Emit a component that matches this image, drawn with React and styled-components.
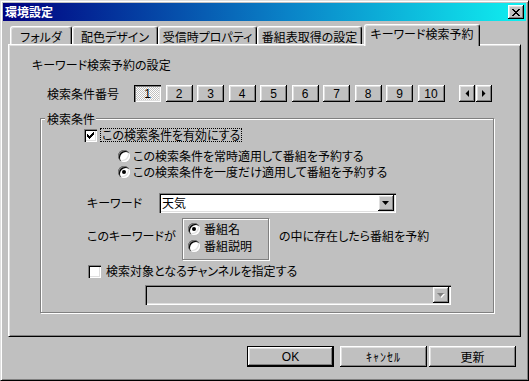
import React from "react";
import styled, { createGlobalStyle } from "styled-components";

const GlobalStyle = createGlobalStyle`
  html, body {
    margin: 0;
    padding: 0;
    background: #c0c0c0;
  }
  body {
    font-family: "Noto Sans CJK JP", "Noto Sans", sans-serif;
    font-size: 12px;
    color: #000;
  }
  * {
    box-sizing: border-box;
  }
`;

const raised = `
  box-shadow: inset -1px -1px #000, inset 1px 1px #fff, inset -2px -2px #808080,
    inset 2px 2px #dfdfdf;
`;

const sunken = `
  box-shadow: inset 1px 1px #808080, inset 2px 2px #000, inset -1px -1px #fff,
    inset -2px -2px #dfdfdf;
`;

const Window = styled.div`
  width: 529px;
  height: 381px;
  background: #c0c0c0;
  border: 1px solid;
  border-color: #dfdfdf #000 #000 #dfdfdf;
  box-shadow: inset 1px 1px #fff, inset -1px -1px #808080;
  padding: 2px;
  display: flex;
  flex-direction: column;
  font-feature-settings: "palt";
`;

const TitleBar = styled.div`
  height: 18px;
  display: flex;
  align-items: center;
  justify-content: space-between;
  padding: 0 2px 0 2px;
  background: linear-gradient(to right, #000080, #0a84c8 55%, #10f0f0);
`;

const Title = styled.span`
  color: #fff;
  font-weight: bold;
  font-size: 12px;
  line-height: 14px;
`;

const CloseButton = styled.span`
  width: 16px;
  height: 14px;
  background: #c0c0c0;
  ${raised}
  display: flex;
  align-items: center;
  justify-content: center;
`;

const TabRow = styled.div`
  display: flex;
  align-items: flex-end;
  height: 20px;
  margin-top: 3px;
  padding-left: 7px;
`;

const Tab = styled.div`
  position: relative;
  width: ${(p) => p.$w}px;
  height: ${(p) => (p.$active ? 22 : 18)}px;
  margin-left: ${(p) => (p.$active ? 2 : 0)}px;
  margin-bottom: ${(p) => (p.$active ? -2 : 0)}px;
  z-index: ${(p) => (p.$active ? 1 : 0)};
  background: #c0c0c0;
  border: 1px solid;
  border-color: #fff #000 transparent #fff;
  border-bottom: none;
  border-radius: 3px 3px 0 0;
  box-shadow: inset -1px 0 #808080, inset 1px 1px #dfdfdf;
  text-align: center;
  line-height: 14px;
  padding-top: ${(p) => (p.$active ? 2 : 3)}px;
  white-space: nowrap;
`;

const Panel = styled.div`
  width: 513px;
  height: 293px;
  margin-left: 5px;
  border: 1px solid;
  border-color: #fff #000 #000 #fff;
  box-shadow: inset 1px 1px #dfdfdf, inset -1px -1px #808080;
  display: flex;
  flex-direction: column;
`;

const Heading = styled.div`
  margin: 13px 0 0 23px;
  line-height: 14px;
`;

const NumberRow = styled.div`
  display: flex;
  align-items: center;
  height: 17px;
  margin: 13px 0 0 38px;
`;

const RowLabel = styled.span`
  width: ${(p) => p.$w}px;
  flex-shrink: 0;
  line-height: 14px;
  white-space: nowrap;
`;

const NumberButtons = styled.div`
  display: flex;
  gap: 4.5px;
`;

const NumButton = styled.span`
  width: 27px;
  height: 17px;
  display: flex;
  align-items: center;
  justify-content: center;
  font-family: "Liberation Sans", Arial, sans-serif;
  font-size: 12px;
  background: ${(p) =>
    p.$pressed
      ? "repeating-conic-gradient(#c0c0c0 0% 25%, #fff 0% 50%) 0 0 / 2px 2px"
      : "#c0c0c0"};
  ${(p) =>
    p.$pressed
      ? "box-shadow: inset 1px 1px #000, inset 2px 2px #808080, inset -1px -1px #fff, inset -2px -2px #dfdfdf;"
      : raised}
  padding-top: ${(p) => (p.$pressed ? 1 : 0)}px;
`;

const ArrowButtons = styled.div`
  display: flex;
  gap: 1px;
  margin-left: 14.5px;
`;

const ArrowButton = styled.span`
  width: 16px;
  height: 17px;
  background: #c0c0c0;
  ${raised}
  display: flex;
  align-items: center;
  justify-content: center;
`;

const Group = styled.fieldset`
  width: 454px;
  height: 201px;
  margin: 10px 0 0 31px;
  padding: 0;
  border: 1px solid #808080;
  box-shadow: inset 1px 1px #fff, 1px 1px #fff;
  min-width: 0;
  display: flex;
  flex-direction: column;
`;

const Legend = styled.legend`
  margin-left: 4px;
  padding: 0 1px 0 2px;
  line-height: 13px;
  background: #c0c0c0;
`;

const Row = styled.div`
  display: flex;
  align-items: ${(p) => p.$align || "center"};
  height: ${(p) => p.$h}px;
  margin-top: ${(p) => p.$mt}px;
  margin-left: ${(p) => p.$ml}px;
  gap: ${(p) => p.$gap || 0}px;
  white-space: nowrap;
  line-height: 14px;
`;

const CheckBox = styled.span`
  width: 13px;
  height: 13px;
  flex-shrink: 0;
  background: #fff;
  ${sunken}
  display: flex;
  align-items: center;
  justify-content: center;
`;

const FocusText = styled.span`
  border: 1px dotted #000;
  padding: 0 1px;
  line-height: 12px;
  height: 14px;
`;

const RadioCircle = styled.span`
  width: 12px;
  height: 12px;
  flex-shrink: 0;
  border-radius: 50%;
  background: #fff;
  ${sunken}
  display: flex;
  align-items: center;
  justify-content: center;
  &::after {
    content: "";
    width: 4px;
    height: 4px;
    border-radius: 50%;
    background: #000;
    display: ${(p) => (p.$checked ? "block" : "none")};
  }
`;

const Combo = styled.div`
  width: ${(p) => p.$w}px;
  height: 20px;
  flex-shrink: 0;
  background: ${(p) => (p.$disabled ? "#c0c0c0" : "#fff")};
  ${sunken}
  padding: 2px;
  display: flex;
  align-items: center;
`;

const ComboText = styled.span`
  flex: 1;
  padding-left: 1px;
  line-height: 14px;
`;

const DropButton = styled.span`
  width: 16px;
  height: 16px;
  background: #c0c0c0;
  ${raised}
  display: flex;
  align-items: center;
  justify-content: center;
`;

const OptionBox = styled.div`
  width: 87px;
  height: 42px;
  flex-shrink: 0;
  border: 1px solid #808080;
  box-shadow: inset 1px 1px #fff, 1px 1px #fff;
  padding: 3px 0 0 5px;
  display: flex;
  flex-direction: column;
  gap: 3px;
`;

const OptionLine = styled.div`
  display: flex;
  align-items: center;
  height: 14px;
  gap: 4px;
  line-height: 14px;
`;

const SideText = styled.span`
  margin-top: 11px;
  margin-left: 10px;
  line-height: 14px;
`;

const ButtonBar = styled.div`
  display: flex;
  margin: 9px 0 0 244px;
`;

const DialogButton = styled.span`
  width: 87px;
  height: 21px;
  margin-left: ${(p) => p.$ml || 0}px;
  display: flex;
  align-items: center;
  justify-content: center;
  background: #c0c0c0;
  font-size: 12px;
  ${(p) =>
    p.$default
      ? "border: 1px solid #000; box-shadow: inset -1px -1px #000, inset 1px 1px #fff, inset -2px -2px #808080, inset 2px 2px #dfdfdf;"
      : raised}
`;

const Latin = styled.span`
  font-family: "Liberation Sans", Arial, sans-serif;
`;

const HalfKana = styled.span`
  font-feature-settings: normal;
  letter-spacing: 1px;
`;

function CheckMark() {
  return (
    <svg width="7" height="7" viewBox="0 0 7 7" shapeRendering="crispEdges">
      <polygon points="0,2 2,4 7,-1 7,2 2,7 0,5" fill="#000" />
    </svg>
  );
}

function DownArrow({ disabled }) {
  return (
    <svg width="8" height="5" viewBox="0 0 8 5">
      {disabled && <polygon points="1,1 8,1 4.5,5" fill="#fff" />}
      <polygon points="0,0 7,0 3.5,4" fill={disabled ? "#808080" : "#000"} />
    </svg>
  );
}

function Radio({ checked, children }) {
  return (
    <>
      <RadioCircle $checked={checked} />
      <span>{children}</span>
    </>
  );
}

export default function App() {
  const numbers = [1, 2, 3, 4, 5, 6, 7, 8, 9, 10];
  return (
    <>
      <GlobalStyle />
      <Window>
        <TitleBar>
          <Title>環境設定</Title>
          <CloseButton>
            <svg width="8" height="7" viewBox="0 0 8 7" shapeRendering="crispEdges">
              <path
                d="M0 0h2v1h1v1h2V1h1V0h2v1H7v1H6v1H5v1h1v1h1v1h1v1H6V6H5V5H3v1H2v1H0V6h1V5h1V4h1V3H2V2H1V1H0z"
                fill="#000"
              />
            </svg>
          </CloseButton>
        </TitleBar>

        <TabRow>
          <Tab $w={62}>フォルダ</Tab>
          <Tab $w={86}>配色デザイン</Tab>
          <Tab $w={99}>受信時プロパティ</Tab>
          <Tab $w={105}>番組表取得の設定</Tab>
          <Tab $w={116} $active>
            キーワード検索予約
          </Tab>
        </TabRow>

        <Panel>
          <Heading>キーワード検索予約の設定</Heading>

          <NumberRow>
            <RowLabel $w={87}>検索条件番号</RowLabel>
            <NumberButtons>
              {numbers.map((n) => (
                <NumButton key={n} $pressed={n === 1}>
                  {n}
                </NumButton>
              ))}
            </NumberButtons>
            <ArrowButtons>
              <ArrowButton>
                <svg width="4" height="7" viewBox="0 0 4 7">
                  <polygon points="4,0 4,7 0.5,3.5" fill="#000" />
                </svg>
              </ArrowButton>
              <ArrowButton>
                <svg width="4" height="7" viewBox="0 0 4 7">
                  <polygon points="0,0 0,7 3.5,3.5" fill="#000" />
                </svg>
              </ArrowButton>
            </ArrowButtons>
          </NumberRow>

          <Group>
            <Legend>検索条件</Legend>

            <Row $h={14} $mt={3} $ml={43} $gap={3}>
              <CheckBox>
                <CheckMark />
              </CheckBox>
              <FocusText>この検索条件を有効にする</FocusText>
            </Row>

            <Row $h={14} $mt={7} $ml={77} $gap={3}>
              <Radio>この検索条件を常時適用して番組を予約する</Radio>
            </Row>
            <Row $h={14} $mt={2} $ml={77} $gap={3}>
              <Radio checked>この検索条件を一度だけ適用して番組を予約する</Radio>
            </Row>

            <Row $h={20} $mt={14} $ml={46}>
              <RowLabel $w={72}>キーワード</RowLabel>
              <Combo $w={237}>
                <ComboText>天気</ComboText>
                <DropButton>
                  <DownArrow />
                </DropButton>
              </Combo>
            </Row>

            <Row $h={42} $mt={5} $ml={46} $align="flex-start">
              <RowLabel $w={95} style={{ marginTop: 11 }}>
                このキーワードが
              </RowLabel>
              <OptionBox>
                <OptionLine>
                  <Radio checked>番組名</Radio>
                </OptionLine>
                <OptionLine>
                  <Radio>番組説明</Radio>
                </OptionLine>
              </OptionBox>
              <SideText>の中に存在したら番組を予約</SideText>
            </Row>

            <Row $h={14} $mt={4} $ml={47} $gap={5}>
              <CheckBox />
              <span>検索対象となるチャンネルを指定する</span>
            </Row>

            <Row $h={20} $mt={7} $ml={104}>
              <Combo $w={306} $disabled>
                <ComboText />
                <DropButton>
                  <DownArrow disabled />
                </DropButton>
              </Combo>
            </Row>
          </Group>
        </Panel>

        <ButtonBar>
          <DialogButton $default>
            <Latin>OK</Latin>
          </DialogButton>
          <DialogButton $ml={6}>
            <HalfKana>ｷｬﾝｾﾙ</HalfKana>
          </DialogButton>
          <DialogButton $ml={2}>更新</DialogButton>
        </ButtonBar>
      </Window>
    </>
  );
}
